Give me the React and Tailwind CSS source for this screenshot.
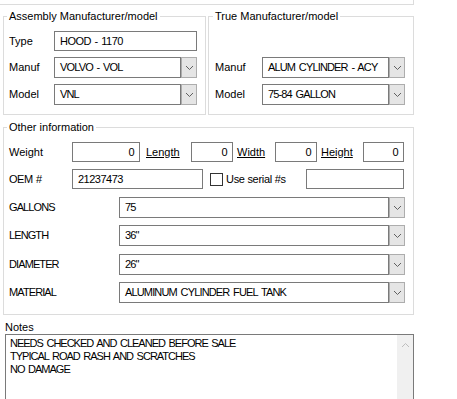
// App.jsx - parts form (Windows style)

const font = { fontFamily: '"Liberation Sans", Arial, sans-serif' };

function Chevron({ up }) {
    return (
        <svg width="9" height="6" viewBox="0 0 9 6" className="block">
            {up ? (
                <polyline points="1,5 4.5,1.5 8,5" fill="none" stroke="#bdbdbd" strokeWidth="1" />
            ) : (
                <polyline points="1,1 4.5,4.5 8,1" fill="none" stroke="#606060" strokeWidth="1" />
            )}
        </svg>
    );
}

function TextBox({ value, width, right }) {
    return (
        <div
            className={`h-[20px] border border-[#7a7a7a] bg-white flex items-center px-[5px] text-black whitespace-nowrap overflow-hidden tracking-[-0.5px] [word-spacing:1px] ${right ? 'justify-end' : ''}`}
            style={{ width }}
        >
            {value}
        </div>
    );
}

function Combo({ value, width }) {
    return (
        <div className="flex h-[21px]">
            <div
                className="h-full border border-[#7a7a7a] bg-white flex items-center px-[5px] whitespace-nowrap overflow-hidden tracking-[-0.85px] [word-spacing:1.5px]"
                style={{ width }}
            >
                {value}
            </div>
            <div className="w-[16px] h-full border border-[#adadad] bg-[#e5e5e5] flex items-center justify-center">
                <Chevron />
            </div>
        </div>
    );
}

function Group({ title, className, children }) {
    return (
        <fieldset className={`border border-[#dcdcdc] ${className}`}>
            <legend className="ml-[-2px] px-[2px] leading-[14px]">{title}</legend>
            {children}
        </fieldset>
    );
}

export default function App() {
    return (
        <div className="w-[457px] h-[399px] overflow-hidden bg-white text-[11px] text-black" style={font}>
            {/* fin del grupo anterior */}
            <div className="h-[5px] w-[414px] border-b border-r border-[#dcdcdc]"></div>

            <div className="flex mt-[4px] pl-[3px]">
                <Group title="Assembly Manufacturer/model" className="w-[203px] pl-[5px] pt-[8px] pb-[9px]">
                    <div className="flex flex-col gap-[6px]">
                        <div className="flex items-center">
                            <span className="w-[45px]">Type</span>
                            <TextBox value="HOOD - 1170" width={143} />
                        </div>
                        <div className="flex items-center">
                            <span className="w-[45px]">Manuf</span>
                            <Combo value="VOLVO - VOL" width={127} />
                        </div>
                        <div className="flex items-center">
                            <span className="w-[45px]">Model</span>
                            <Combo value="VNL" width={127} />
                        </div>
                    </div>
                </Group>
                <Group title="True Manufacturer/model" className="ml-[2px] w-[206px] pl-[6px] pt-[8px] pb-[9px]">
                    <div className="flex flex-col gap-[6px]">
                        <div className="h-[20px]"></div>
                        <div className="flex items-center">
                            <span className="w-[47px]">Manuf</span>
                            <Combo value="ALUM CYLINDER - ACY" width={127} />
                        </div>
                        <div className="flex items-center">
                            <span className="w-[47px]">Model</span>
                            <Combo value="75-84 GALLON" width={127} />
                        </div>
                    </div>
                </Group>
            </div>

            <Group title="Other information" className="mt-[5px] ml-[3px] w-[411px] pl-[5px] pt-[8px] pb-[11px]">
                <div className="flex flex-col">
                    <div className="flex items-center">
                        <span className="w-[63px]">Weight</span>
                        <TextBox value="0" width={68} right />
                        <span className="ml-[6px] w-[45px] underline">Length</span>
                        <TextBox value="0" width={42} right />
                        <span className="ml-[4px] w-[38px] underline">Width</span>
                        <TextBox value="0" width={42} right />
                        <span className="ml-[4px] w-[42px] underline">Height</span>
                        <TextBox value="0" width={41} right />
                    </div>
                    <div className="flex items-center mt-[7px]">
                        <span className="w-[63px] tracking-[-0.5px] [word-spacing:1px]">OEM #</span>
                        <TextBox value="21237473" width={131} />
                        <div className="ml-[7px] w-[13px] h-[13px] border border-[#333333] bg-white"></div>
                        <span className="ml-[3px] w-[80px] tracking-[-0.3px]">Use serial #s</span>
                        <TextBox value="" width={98} />
                    </div>
                    {[
                        ['GALLONS', '75', 'mt-[8px]'],
                        ['LENGTH', '36"', 'mt-[7px]'],
                        ['DIAMETER', '26"', 'mt-[8px]'],
                        ['MATERIAL', 'ALUMINUM CYLINDER FUEL TANK', 'mt-[7px]'],
                    ].map(([label, value, mt]) => (
                        <div key={label} className={`flex items-center ${mt}`}>
                            <span className="w-[110px] tracking-[-0.9px]">{label}</span>
                            <Combo value={value} width={270} />
                        </div>
                    ))}
                </div>
            </Group>

            {/* Notas */}
            <div className="pl-[5px] mt-[5px] leading-[14px]">Notes</div>
            <div className="ml-[5px] w-[409px] h-[80px] border border-[#7a7a7a] flex">
                <div className="flex-1 pl-[4px] pt-[2px] leading-[13px] tracking-[-1px] [word-spacing:1.5px]">
                    <div>NEEDS CHECKED AND CLEANED BEFORE SALE</div>
                    <div>TYPICAL ROAD RASH AND SCRATCHES</div>
                    <div>NO DAMAGE</div>
                </div>
                <div className="w-[16px] h-full bg-[#f0f0f0] flex justify-center pt-[7px]">
                    <Chevron up />
                </div>
            </div>
        </div>
    );
}
